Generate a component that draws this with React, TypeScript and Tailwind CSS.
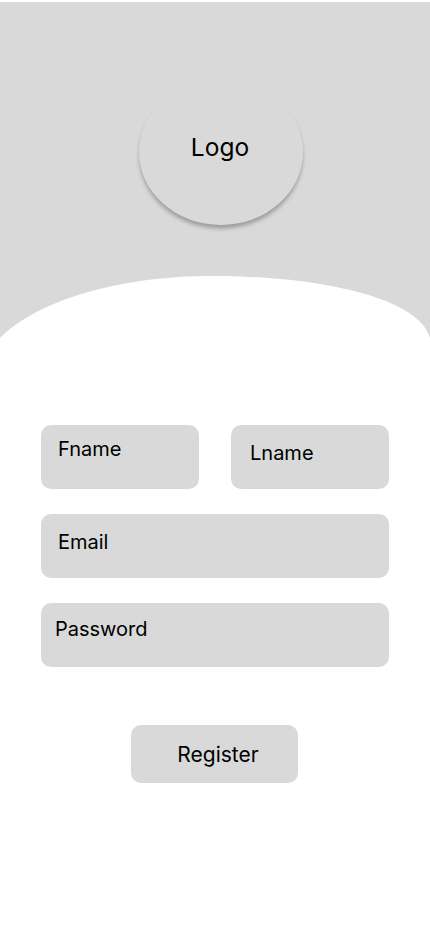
const fieldClass = "h-16 rounded-[10px] bg-[#d9d9d9] text-xl leading-6";

export default function App() {
  return (
    <main className="h-[932px] w-[430px] overflow-hidden bg-white font-['Inter',sans-serif] text-black">
      <header className="relative h-[338px] pt-[79px]">
        <svg className="absolute inset-0" width="430" height="338" viewBox="0 0 430 338" aria-hidden="true">
          <path fill="#d9d9d9" d="M0 2H430V338C421 301 330 276 212 276C120 276 38 300 0 338Z" />
        </svg>
        <div className="relative ml-[139px] flex h-[146px] w-[164px] items-center justify-center rounded-[50%] bg-[#d9d9d9] pr-0.5 pb-[9px] text-[24.5px] shadow-[0_4px_4px_-0.5px_rgba(0,0,0,0.29)]">
          Logo
        </div>
      </header>
      <form className="mt-[87px] flex flex-col px-[41px]">
        <div className="grid grid-cols-2 gap-8">
          <div className={`${fieldClass} pl-[17px] pt-3`}>Fname</div>
          <div className={`${fieldClass} pl-[19px] pt-4`}>Lname</div>
        </div>
        <div className={`${fieldClass} mt-[25px] pl-[17px] pt-4`}>Email</div>
        <div className={`${fieldClass} mt-[25px] pl-[14px] pt-[14px]`}>Password</div>
        <button type="button" className="ml-[90px] mt-[58px] h-[58px] w-[167px] rounded-[10px] bg-[#d9d9d9] pl-[7px] pt-0.5 text-[21px]">
          Register
        </button>
      </form>
    </main>
  );
}
